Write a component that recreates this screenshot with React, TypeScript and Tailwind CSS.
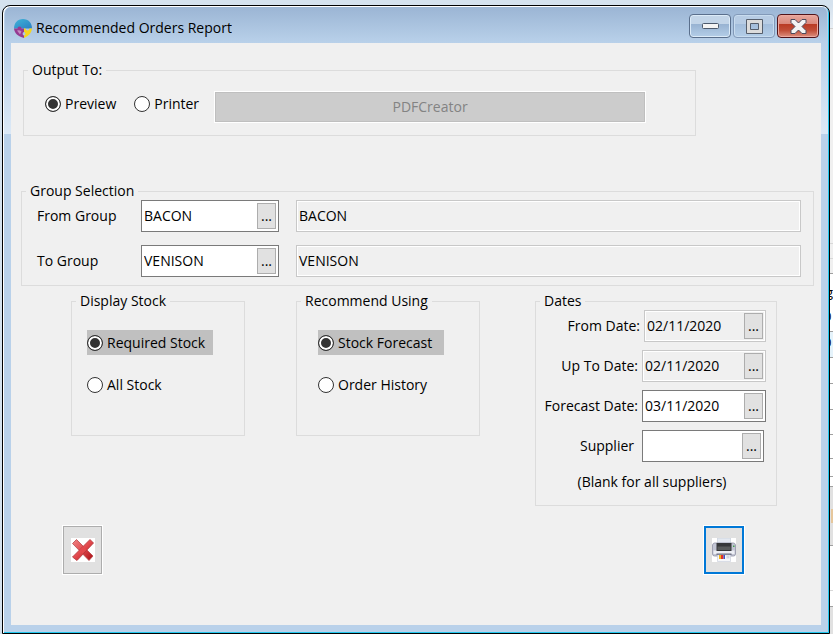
import { useState, type ReactNode } from 'react';

interface GroupBoxProps {
  title: string;
  className?: string;
  children: ReactNode;
}

function GroupBox({ title, className = '', children }: GroupBoxProps) {
  return (
    <fieldset className={`border border-[#dcdcdc] min-w-0 ${className}`}>
      <legend className="ml-1 px-1 leading-[18px]">{title}</legend>
      {children}
    </fieldset>
  );
}

interface RadioProps {
  name: string;
  label: string;
  checked: boolean;
  highlight?: boolean;
  onSelect: () => void;
}

function Radio({ name, label, checked, highlight, onSelect }: RadioProps) {
  return (
    <label className={`flex items-center gap-1 h-[25px] ${highlight ? 'bg-[#c0c0c0]' : ''}`}>
      <input
        type="radio"
        name={name}
        checked={checked}
        onChange={onSelect}
        className="appearance-none size-4 shrink-0 rounded-full border border-[#333] bg-white checked:bg-[#333] checked:shadow-[inset_0_0_0_2px_#fff]"
      />
      {label}
    </label>
  );
}

interface LookupProps {
  id: string;
  label: string;
  initial: string;
  readOnly?: boolean;
  className?: string;
}

function Lookup({ id, label, initial, readOnly, className = '' }: LookupProps) {
  const [value, setValue] = useState(initial);
  return (
    <div
      className={`flex h-8 border p-0.5 ${readOnly ? 'border-[#c8c8c8] bg-[#f0f0f0] shadow-[inset_0_0_0_1px_#fff]' : 'border-[#7a7a7a] bg-white'} ${className}`}
    >
      <input
        id={id}
        value={value}
        readOnly={readOnly}
        onChange={(e) => setValue(e.target.value)}
        className="w-full min-w-0 bg-transparent outline-none"
      />
      <button
        type="button"
        aria-label={`Look up ${label}`}
        className="w-[19px] shrink-0 border border-[#adadad] bg-[#e1e1e1] leading-6"
      >
        ...
      </button>
    </div>
  );
}

function AppLogo() {
  return (
    <svg viewBox="0 0 18 19" className="w-[18px] h-[19px]">
      <defs>
        <linearGradient id="logo-blue" x1="0" y1="0" x2="1" y2="1">
          <stop offset="0" stopColor="#3fb4d8" />
          <stop offset="1" stopColor="#2a7fc4" />
        </linearGradient>
      </defs>
      <path d="M0 9.500C0 4 3.500 0 9 0s9 4 9 9.500Z" fill="url(#logo-blue)" />
      <path d="M0 9.500h3.500a2 2 0 0 1 4 0H10V13a1.800 1.800 0 0 0 0 3.500V19C4 17 .5 14.500 0 9.500Z" fill="#963a92" />
      <path d="M10 9.500h1.500a2 2 0 0 0 4 0H18c-.5 5-4 7.500-8 9.500v-2.500A1.800 1.800 0 0 0 10 13Z" fill="#f7d51d" />
      <path d="M3 11.500q2.500-1 4.500 1l-1.500 3Z" fill="#c48bc0" />
    </svg>
  );
}

function CancelIcon() {
  return (
    <svg viewBox="0 0 24 24" className="size-6 bg-white">
      <defs>
        <linearGradient id="cross" x1="0" y1="0" x2="1" y2="1">
          <stop offset="0" stopColor="#ee8585" />
          <stop offset=".5" stopColor="#e2484c" />
          <stop offset="1" stopColor="#a50d14" />
        </linearGradient>
      </defs>
      <path d="M1.500 5.500 5.500 1.500 22 18l-4 4.500Z" fill="url(#cross)" stroke="#b9494d" strokeWidth=".8" strokeLinejoin="round" />
      <path d="M19 1.500 22.500 5 6 22.500 1.500 19Z" fill="url(#cross)" stroke="#b0353a" strokeWidth=".8" strokeLinejoin="round" />
      <path d="M12 8.500 15.500 12 11.500 15.500 8.500 12Z" fill="#e2484c" />
    </svg>
  );
}

function PrinterIcon() {
  return (
    <svg viewBox="0 0 24 24" className="size-6 bg-white">
      <path d="M5.500 0h13v6h-13Z" fill="#e3e8f0" stroke="#c3cad6" strokeWidth=".6" />
      <path d="M2.500 5h19q1.500 0 2 2v9q0 2-2 2h-19q-2 0-2-2V7q.5-2 2-2Z" fill="#c3c6d4" stroke="#8e91a3" strokeWidth=".8" />
      <path d="M1.500 12.500h21V16h-21Z" fill="#eceef4" />
      <path d="M4.500 5h15v8h-15Z" fill="#36383a" />
      <path d="M5.500 8.500h13V12h-13Z" fill="#585b5b" />
      <path d="M21 7.500h1.500V9H21Z" fill="#44a24d" />
      <path d="M4.500 15.500h15V17h-15Z" fill="#6b6d80" />
      <path d="M5.500 17h13v6.500h-13Z" fill="#f6f7fa" stroke="#c3cad6" strokeWidth=".6" />
      <path d="M7 17h2v4H7Z" fill="#f4b51c" />
      <path d="M9 17h2.500v4H9Z" fill="#e0312c" />
      <path d="M11.500 17h1.500v4h-1.500Z" fill="#3d56c5" />
      <path d="M14.500 17.500h3v3h-3Z" fill="#d3d6df" />
    </svg>
  );
}

// Sliver of the grid that shows behind the window's right edge
function BackgroundGrid() {
  return (
    <aside aria-hidden="true" className="w-[3px] shrink-0 overflow-hidden bg-white leading-5 text-[13px]">
      <div className="h-6 bg-linear-to-b from-[#d5e2ee] to-[#e8eef4] border-b border-[#d0d0d0]" />
      <div className="h-[215px] bg-[#f0f0f0] border-b border-[#d8d8d8]" />
      <div className="h-[15px] bg-[#f0f0f0] border-b border-[#d8d8d8]" />
      <div className="h-[15px] bg-[#f0f0f0] border-b border-[#a0a0a0]" />
      <div className="h-[58px] border-b border-[#a0a0a0] pt-2">
        <div className="-indent-1">g</div>
        <div className="mt-1 -indent-1.5">0</div>
      </div>
      <div className="h-[26px] bg-[#e5f3fb] border-b border-[#a0a0a0] -indent-1.5">0</div>
      <div className="h-[26px] border-b border-[#a0a0a0]" />
      <div className="h-[26px] border-b border-[#a0a0a0]" />
      <div className="h-[25px] border-b border-[#a0a0a0]" />
      <div className="h-6 border-b border-[#a0a0a0]" />
      <div className="h-[18px] border-b border-[#a0a0a0]" />
      <div className="h-[10px] border-b border-[#a0a0a0]" />
      <div className="h-[59px] bg-[#e1e1e1] border-b border-[#a0a0a0] pt-[22px] pl-px">
        <div className="h-[14px] bg-[#e6c79c]" />
      </div>
      <div className="h-[45px] border-b border-[#d8d8d8]" />
      <div className="h-4 border-b border-[#a0a0a0]" />
      <div className="h-[27px] bg-[#e1e1e1]" />
    </aside>
  );
}

export default function App() {
  const [output, setOutput] = useState('Preview');
  const [display, setDisplay] = useState('Required Stock');
  const [using, setUsing] = useState('Stock Forecast');

  return (
    <div className="min-h-screen flex flex-col bg-[#d5e2ee] pt-[5px] pl-0.5 font-['Open_Sans','Noto_Sans',sans-serif] text-[14px] leading-5 text-black">
      <div className="flex-1 flex">
        <div className="flex-1 min-w-0 flex flex-col rounded-t-lg border border-black bg-[linear-gradient(#b9d1ea_38px,#dce9f6_128px,#b9d1ea_128px)] shadow-[inset_1px_1px_0_#fff,inset_-1px_-1px_0_#22c7ee] px-2 pb-2">
          <header className="flex items-center h-9 gap-1 -mx-1.5 mt-px pl-[9px] pr-2 rounded-t-md bg-linear-to-b from-[#9bb5d4] to-[#b9d1ea]">
            <div className="flex-1 min-w-0 flex items-center gap-1 pt-1.5">
              <AppLogo />
              <h1 className="truncate">Recommended Orders Report</h1>
            </div>
            <div className="flex gap-0.5 pt-0.5">
              <button type="button" aria-label="Minimize" className="flex items-center justify-center w-[42px] h-6 rounded-sm border border-[#5a6f8c] bg-[linear-gradient(#c3d5e8_42%,#98b3d2_42%,#b4cee8)] shadow-[inset_0_0_0_1px_#dcebf8]">
                <svg viewBox="0 0 17 7" className="w-[17px] h-[7px]">
                  <rect x=".5" y=".5" width="16" height="5" rx="1" fill="#f4f4f4" stroke="#4d5a6c" />
                </svg>
              </button>
              <button type="button" aria-label="Maximize" className="flex items-center justify-center w-[42px] h-6 rounded-sm border border-[#8299b8] bg-[linear-gradient(#b7cce4_42%,#a3bddb_42%,#b4cee8)] shadow-[inset_0_0_0_1px_#c8dcef]">
                <svg viewBox="0 0 17 15" className="w-[17px] h-[15px]">
                  <path d="M.5.5h16v14H.5Zm4 4v6h8v-6Z" fill="#dcdcdc" fillRule="evenodd" stroke="#555e6c" />
                </svg>
              </button>
              <button type="button" aria-label="Close" className="flex items-center justify-center w-[42px] h-6 rounded-sm border border-[#51141a] bg-[linear-gradient(#e7a79d,#d9867a_42%,#b93a24_42%,#c14e38_70%,#dc9080)] shadow-[inset_0_0_0_1px_#eda99f]">
                <svg viewBox="0 0 17 15" className="w-[17px] h-[15px]">
                  <path d="M1 .5h4L8.500 4 12 .5h4v3L12 7.500l4 4v3h-4L8.500 11 5 14.500H1v-3l4-4-4-4Z" fill="#f4f4f4" stroke="#4b4a5c" strokeLinejoin="round" />
                </svg>
              </button>
            </div>
          </header>

          <main className="flex-1 bg-[#f0f0f0] pt-[18px] px-2.5">
            <GroupBox title="Output To:" className="max-w-[673px] h-[75px] ml-0.5">
              <div className="flex items-start gap-[18px] pl-[21px] pr-[50px] pt-3">
                <Radio name="output" label="Preview" checked={output === 'Preview'} onSelect={() => setOutput('Preview')} />
                <Radio name="output" label="Printer" checked={output === 'Printer'} onSelect={() => setOutput('Printer')} />
                <button type="button" disabled className="flex-1 h-[30px] -ml-0.5 mt-px border border-[#bfbfbf] bg-[#ccc] text-[#838383] outline outline-white">
                  PDFCreator
                </button>
              </div>
            </GroupBox>

            <GroupBox title="Group Selection" className="mt-[46px] -mr-[3px] pb-2">
              <div className="grid grid-cols-[104px_138px_1fr] gap-y-[13px] items-center pl-[15px] pr-3">
                <label htmlFor="from-group">From Group</label>
                <Lookup id="from-group" label="From Group" initial="BACON" />
                <output htmlFor="from-group" className="ml-[17px] h-8 border border-[#c8c8c8] shadow-[inset_0_0_0_1px_#fff] px-0.5 leading-[30px]">BACON</output>
                <label htmlFor="to-group">To Group</label>
                <Lookup id="to-group" label="To Group" initial="VENISON" />
                <output htmlFor="to-group" className="ml-[17px] h-8 border border-[#c8c8c8] shadow-[inset_0_0_0_1px_#fff] px-0.5 leading-[30px]">VENISON</output>
              </div>
            </GroupBox>

            <div className="flex items-start mt-1.5 ml-[50px] mr-[34px]">
              <GroupBox title="Display Stock" className="w-[174px] h-[144px]">
                <div className="w-[126px] ml-[15px] pt-5 flex flex-col gap-[17px]">
                  <Radio name="display" label="Required Stock" highlight={display === 'Required Stock'} checked={display === 'Required Stock'} onSelect={() => setDisplay('Required Stock')} />
                  <Radio name="display" label="All Stock" highlight={display === 'All Stock'} checked={display === 'All Stock'} onSelect={() => setDisplay('All Stock')} />
                </div>
              </GroupBox>
              <GroupBox title="Recommend Using" className="w-[184px] h-[144px] ml-[51px]">
                <div className="w-[126px] ml-[21px] pt-5 flex flex-col gap-[17px]">
                  <Radio name="using" label="Stock Forecast" highlight={using === 'Stock Forecast'} checked={using === 'Stock Forecast'} onSelect={() => setUsing('Stock Forecast')} />
                  <Radio name="using" label="Order History" highlight={using === 'Order History'} checked={using === 'Order History'} onSelect={() => setUsing('Order History')} />
                </div>
              </GroupBox>
              <GroupBox title="Dates" className="w-[242px] h-[214px] ml-auto">
                <div className="grid grid-cols-[98px_1fr] gap-y-2 items-center text-right pl-2 pr-2.5">
                  <label htmlFor="from-date" className="pr-0.5">From Date:</label>
                  <Lookup id="from-date" label="From Date" initial="02/11/2020" readOnly className="ml-0.5" />
                  <label htmlFor="up-to-date" className="pr-1">Up To Date:</label>
                  <Lookup id="up-to-date" label="Up To Date" initial="02/11/2020" readOnly />
                  <label htmlFor="forecast-date" className="pr-1">Forecast Date:</label>
                  <Lookup id="forecast-date" label="Forecast Date" initial="03/11/2020" />
                  <label htmlFor="supplier" className="pr-2">Supplier</label>
                  <Lookup id="supplier" label="Supplier" initial="" className="mr-0.5" />
                </div>
                <p className="mt-2.5 pr-2 text-center">(Blank for all suppliers)</p>
              </GroupBox>
            </div>

            <div className="flex justify-between items-start mt-5 pb-[51px] ml-[42px] mr-[67px]">
              <button type="button" aria-label="Cancel" className="flex items-center justify-center w-[39px] h-12 border border-[#adadad] bg-[#e1e1e1] outline outline-white">
                <CancelIcon />
              </button>
              <button type="button" aria-label="Print" className="flex items-center justify-center w-10 h-12 border-2 border-[#0078d7] bg-[#e1e1e1] outline outline-white">
                <PrinterIcon />
              </button>
            </div>
          </main>
        </div>
        <BackgroundGrid />
      </div>
    </div>
  );
}
